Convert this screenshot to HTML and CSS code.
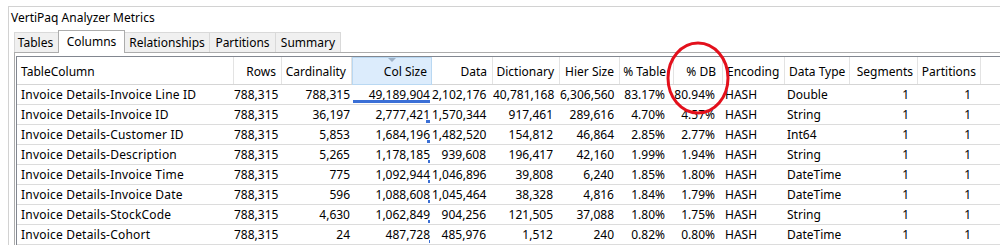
FILE: index.html
```html
<!DOCTYPE html>
<html>
<head>
<meta charset="utf-8">
<link rel="stylesheet" href="styles.css">
</head>
<body>
<div class="panel">
  <div class="title">VertiPaq Analyzer Metrics</div>
  <div class="tabs">
    <div class="tab t1">Tables</div>
    <div class="tab t2 sel">Columns</div>
    <div class="tab t3">Relationships</div>
    <div class="tab t4">Partitions</div>
    <div class="tab t5">Summary</div>
  </div>
  <div class="tabcontent">
    <div class="grid">
      <div class="row hd">
        <div class="c c1">TableColumn</div>
        <div class="c c2">Rows</div>
        <div class="c c3">Cardinality</div>
        <div class="c c4 sorted"><span class="arrow"></span>Col Size</div>
        <div class="c c5">Data</div>
        <div class="c c6">Dictionary</div>
        <div class="c c7">Hier Size</div>
        <div class="c c8">% Table</div>
        <div class="c c9">% DB</div>
        <div class="c c10">Encoding</div>
        <div class="c c11">Data Type</div>
        <div class="c c12">Segments</div>
        <div class="c c13">Partitions</div>
        <div class="c c14"></div>
      </div>
      <div class="row">
        <div class="c c1">Invoice Details-Invoice Line ID</div><div class="c c2">788,315</div><div class="c c3">788,315</div>
        <div class="c c4">49,189,904<span class="bar" style="width:77px"></span></div>
        <div class="c c5">2,102,176</div><div class="c c6">40,781,168</div><div class="c c7">6,306,560</div><div class="c c8">83.17%</div><div class="c c9">80.94%</div><div class="c c10">HASH</div><div class="c c11">Double</div><div class="c c12">1</div><div class="c c13">1</div><div class="c c14"></div>
      </div>
      <div class="row">
        <div class="c c1">Invoice Details-Invoice ID</div><div class="c c2">788,315</div><div class="c c3">36,197</div>
        <div class="c c4">2,777,421<span class="bar" style="width:4px"></span></div>
        <div class="c c5">1,570,344</div><div class="c c6">917,461</div><div class="c c7">289,616</div><div class="c c8">4.70%</div><div class="c c9">4.57%</div><div class="c c10">HASH</div><div class="c c11">String</div><div class="c c12">1</div><div class="c c13">1</div><div class="c c14"></div>
      </div>
      <div class="row">
        <div class="c c1">Invoice Details-Customer ID</div><div class="c c2">788,315</div><div class="c c3">5,853</div>
        <div class="c c4">1,684,196<span class="bar" style="width:3px"></span></div>
        <div class="c c5">1,482,520</div><div class="c c6">154,812</div><div class="c c7">46,864</div><div class="c c8">2.85%</div><div class="c c9">2.77%</div><div class="c c10">HASH</div><div class="c c11">Int64</div><div class="c c12">1</div><div class="c c13">1</div><div class="c c14"></div>
      </div>
      <div class="row">
        <div class="c c1">Invoice Details-Description</div><div class="c c2">788,315</div><div class="c c3">5,265</div>
        <div class="c c4">1,178,185<span class="bar" style="width:2px"></span></div>
        <div class="c c5">939,608</div><div class="c c6">196,417</div><div class="c c7">42,160</div><div class="c c8">1.99%</div><div class="c c9">1.94%</div><div class="c c10">HASH</div><div class="c c11">String</div><div class="c c12">1</div><div class="c c13">1</div><div class="c c14"></div>
      </div>
      <div class="row">
        <div class="c c1">Invoice Details-Invoice Time</div><div class="c c2">788,315</div><div class="c c3">775</div>
        <div class="c c4">1,092,944<span class="bar" style="width:2px"></span></div>
        <div class="c c5">1,046,896</div><div class="c c6">39,808</div><div class="c c7">6,240</div><div class="c c8">1.85%</div><div class="c c9">1.80%</div><div class="c c10">HASH</div><div class="c c11">DateTime</div><div class="c c12">1</div><div class="c c13">1</div><div class="c c14"></div>
      </div>
      <div class="row">
        <div class="c c1">Invoice Details-Invoice Date</div><div class="c c2">788,315</div><div class="c c3">596</div>
        <div class="c c4">1,088,608<span class="bar" style="width:2px"></span></div>
        <div class="c c5">1,045,464</div><div class="c c6">38,328</div><div class="c c7">4,816</div><div class="c c8">1.84%</div><div class="c c9">1.79%</div><div class="c c10">HASH</div><div class="c c11">DateTime</div><div class="c c12">1</div><div class="c c13">1</div><div class="c c14"></div>
      </div>
      <div class="row">
        <div class="c c1">Invoice Details-StockCode</div><div class="c c2">788,315</div><div class="c c3">4,630</div>
        <div class="c c4">1,062,849<span class="bar" style="width:2px"></span></div>
        <div class="c c5">904,256</div><div class="c c6">121,505</div><div class="c c7">37,088</div><div class="c c8">1.80%</div><div class="c c9">1.75%</div><div class="c c10">HASH</div><div class="c c11">String</div><div class="c c12">1</div><div class="c c13">1</div><div class="c c14"></div>
      </div>
      <div class="row">
        <div class="c c1">Invoice Details-Cohort</div><div class="c c2">788,315</div><div class="c c3">24</div>
        <div class="c c4">487,728<span class="bar" style="width:1px"></span></div>
        <div class="c c5">485,976</div><div class="c c6">1,512</div><div class="c c7">240</div><div class="c c8">0.82%</div><div class="c c9">0.80%</div><div class="c c10">HASH</div><div class="c c11">DateTime</div><div class="c c12">1</div><div class="c c13">1</div><div class="c c14"></div>
      </div>
    </div>
  </div>
</div>
<svg class="circle" width="72" height="80" viewBox="0 0 72 80">
  <ellipse cx="36" cy="40" rx="30" ry="35" fill="none" stroke="#e3101c" stroke-width="3"/>
</svg>
</body>
</html>
```
FILE: styles.css
```css
html, body {
  margin: 0;
  padding: 0;
  background: #ffffff;
}
body {
  position: relative;
  font-family: "Noto Sans", "Open Sans", sans-serif;
  font-size: 12px;
  color: #000000;
  overflow: hidden;
  height: 247px;
}
.panel {
  margin: 6px 0 0 8px;
  border-top: 1px solid #d2d2d2;
  border-left: 1px solid #d2d2d2;
}
.title {
  padding: 3px 0 4px 2px;
  line-height: 16px;
  height: 16px;
}
.tabs {
  display: flex;
  align-items: flex-end;
  height: 22px;
  margin-left: 5px;
}
.tab {
  box-sizing: border-box;
  height: 20px;
  line-height: 19px;
  text-align: center;
  background: #f0f0f0;
  border: 1px solid #d9d9d9;
  border-bottom: none;
  margin-left: -1px;
  white-space: nowrap;
}
.t1 { width: 45px; margin-left: 0; padding-right: 2px; }
.t2 { width: 67px; }
.t3 { width: 86px; }
.t4 { width: 67px; }
.t5 { width: 66px; }
.tab.sel {
  position: relative;
  z-index: 2;
  height: 23px;
  line-height: 21px;
  background: #ffffff;
  border-color: #acacac;
  margin-bottom: -1px;
}
.tabcontent {
  margin-left: 5px;
  border-top: 1px solid #acacac;
  border-left: 1px solid #acacac;
  padding: 3px 0 0 1px;
}
.grid {
  border-top: 1px solid #828790;
  border-left: 1px solid #828790;
}
.row {
  display: grid;
  grid-template-columns: 217px 48px 70px 80px 61px 67px 60px 54px 49px 62px 65px 68px 63px 1fr;
  height: 20px;
  box-sizing: border-box;
  border-bottom: 1px solid #dcdcdc;
  line-height: 19px;
  white-space: nowrap;
}
.row.hd {
  height: 28px;
  line-height: 23px;
  border-bottom: 1px solid #d5d5d5;
}
.c {
  box-sizing: border-box;
  text-align: right;
  overflow: hidden;
  position: relative;
}
.hd .c {
  padding-top: 3px;
  border-right: 1px solid #e3e3e3;
}
.hd .c14 { border-right: none; }
.c1, .c10, .c11 { text-align: left; }
.c1 { padding-left: 4px; }
.row .c1 { letter-spacing: 0.2px; }
.hd .c1 { padding-left: 4px; letter-spacing: 0; }

.row .c2 { padding-right: 4px; }
.row .c3 { padding-right: 2px; }
.row .c4 { padding-right: 2px; }
.row .c5 { padding-right: 7px; }
.row .c6 { padding-right: 7px; }
.row .c7 { padding-right: 6px; }
.row .c8 { padding-right: 9px; }
.row .c9 { padding-right: 8px; }
.row .c10 { padding-left: 2px; }
.row .c11 { padding-left: 2px; }
.row .c12 { padding-right: 9px; }
.row .c13 { padding-right: 10px; }

.hd .c2 { padding-right: 5px; }
.hd .c3 { padding-right: 5px; }
.hd .c4 { padding-right: 4px; }
.hd .c5 { padding-right: 5px; }
.hd .c6 { padding-right: 5px; }
.hd .c7 { padding-right: 5px; }
.hd .c8 { padding-right: 7px; }
.hd .c9 { padding-right: 6px; }
.hd .c10 { padding-left: 4px; }
.hd .c11 { padding-left: 4px; }
.hd .c12 { padding-right: 4px; }
.hd .c13 { padding-right: 4px; }

.hd .sorted {
  background: #dcecfc;
  border-right-color: #b9d8f2;
  box-shadow: inset 1px 1px 0 #b9d8f2, inset 0 -1px 0 #b9d8f2;
  margin-bottom: -1px;
}
.arrow {
  position: absolute;
  top: 1px;
  left: 36px;
  width: 0;
  height: 0;
  border-left: 4px solid transparent;
  border-right: 4px solid transparent;
  border-top: 4px solid #9eb2c8;
}
.bar {
  position: absolute;
  right: 2px;
  bottom: 1px;
  height: 3px;
  background: #3a6fd6;
}
.circle {
  position: absolute;
  left: 662px;
  top: 38px;
}
```
